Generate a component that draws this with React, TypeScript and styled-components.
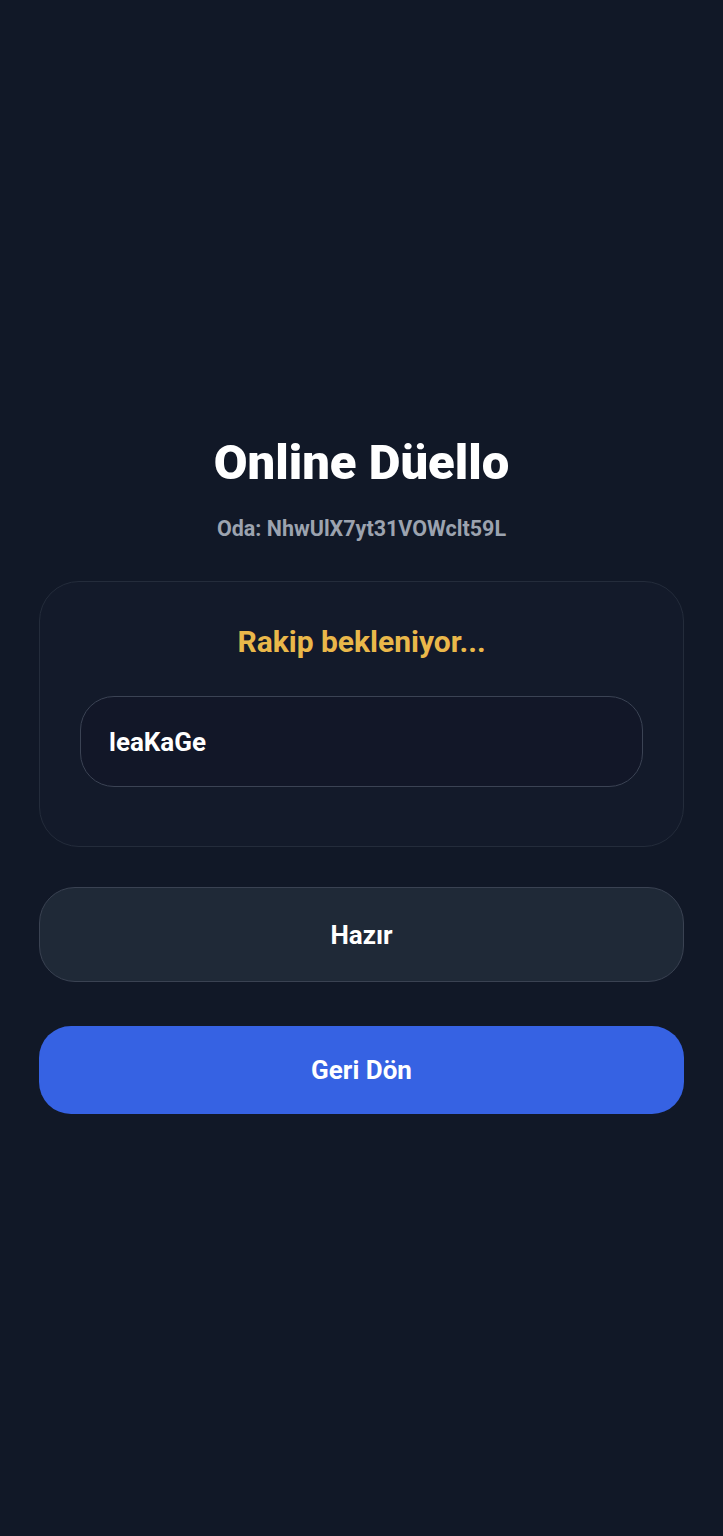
import styled, { createGlobalStyle } from "styled-components";

const GlobalStyle = createGlobalStyle`
  html, body {
    margin: 0;
    padding: 0;
    background: #111827;
  }
  body {
    font-family: Roboto, "Noto Sans", "Liberation Sans", sans-serif;
  }
`;

const App: React.FC = () => {
  return (
    <>
      <GlobalStyle />
      <Screen>
        <Title>Online Düello</Title>
        <RoomCode>Oda: NhwUlX7yt31VOWclt59L</RoomCode>
        <LobbyCard>
          <Status>Rakip bekleniyor...</Status>
          <PlayerSlot>leaKaGe</PlayerSlot>
        </LobbyCard>
        <ReadyButton>Hazır</ReadyButton>
        <BackButton>Geri Dön</BackButton>
      </Screen>
    </>
  );
};

export default App;

const Screen = styled.main`
  min-height: 1536px;
  box-sizing: border-box;
  padding: 435px 39px 0;
  display: flex;
  flex-direction: column;
  align-items: stretch;
  color: #ffffff;
`;

const Title = styled.h1`
  margin: 0;
  font-size: 49px;
  font-weight: 900;
  line-height: 56px;
  text-align: center;
  color: #ffffff;
`;

const RoomCode = styled.p`
  margin: 25px 0 0;
  font-size: 21.5px;
  font-weight: 700;
  line-height: 26px;
  text-align: center;
  color: #9ca3af;
`;

const LobbyCard = styled.section`
  margin-top: 39px;
  height: 266px;
  box-sizing: border-box;
  padding: 42px 40px 0;
  border: 1.5px solid #242c3b;
  border-radius: 40px;
  background: #131a2a;
  display: flex;
  flex-direction: column;
  align-items: stretch;
`;

const Status = styled.div`
  font-size: 30px;
  font-weight: 700;
  line-height: 36px;
  text-align: center;
  color: #eab84a;
`;

const PlayerSlot = styled.div`
  margin-top: 36px;
  height: 91px;
  box-sizing: border-box;
  padding: 0 28px;
  display: flex;
  align-items: center;
  border: 1.5px solid #3b4354;
  border-radius: 34px;
  background: #121728;
  font-size: 26px;
  font-weight: 700;
  color: #ffffff;
`;

const ReadyButton = styled.button`
  margin-top: 40px;
  height: 95px;
  border: 1.5px solid #3a4252;
  border-radius: 36px;
  background: #1f2937;
  font-family: inherit;
  font-size: 26px;
  font-weight: 700;
  color: #ffffff;
`;

const BackButton = styled.button`
  margin-top: 44px;
  height: 88px;
  border: none;
  border-radius: 32px;
  background: #3662e3;
  font-family: inherit;
  font-size: 26px;
  font-weight: 700;
  color: #ffffff;
`;
